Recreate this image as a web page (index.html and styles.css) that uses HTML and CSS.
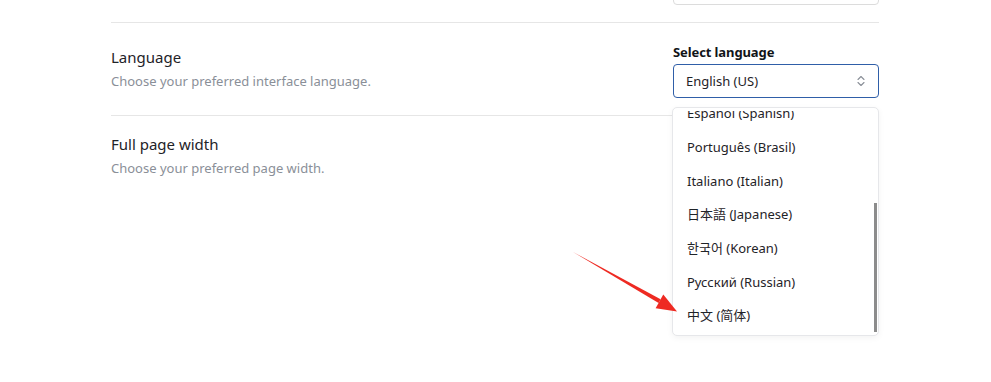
FILE: index.html
```html
<!DOCTYPE html>
<html lang="en">
<head>
<meta charset="utf-8">
<title>Settings</title>
<link rel="stylesheet" href="styles.css">
</head>
<body>
<main class="settings">
  <section class="row">
    <div class="row-text"></div>
    <div class="control">
      <div class="select"></div>
    </div>
  </section>
  <section class="row">
    <div class="row-text">
      <div class="row-title">Language</div>
      <div class="row-desc">Choose your preferred interface language.</div>
    </div>
    <div class="control">
      <div class="control-label">Select language</div>
      <div class="select select-open">
        <span>English (US)</span>
        <svg class="chev" width="10" height="12" viewBox="0 0 10 12"><path d="M2 4.5 L5 1.5 L8 4.5 M2 7.5 L5 10.5 L8 7.5" fill="none" stroke="#8a8f98" stroke-width="1.1" stroke-linecap="round" stroke-linejoin="round"/></svg>
      </div>
      <div class="dropdown">
        <div class="scroll">
          <ul class="options">
            <li>Español (Spanish)</li>
            <li>Português (Brasil)</li>
            <li>Italiano (Italian)</li>
            <li>日本語 (Japanese)</li>
            <li>한국어 (Korean)</li>
            <li>Русский (Russian)</li>
            <li>中文 (简体)</li>
          </ul>
        </div>
        <div class="thumb"></div>
      </div>
    </div>
  </section>
  <section class="row">
    <div class="row-text">
      <div class="row-title">Full page width</div>
      <div class="row-desc">Choose your preferred page width.</div>
    </div>
    <div class="control"></div>
  </section>
</main>
<svg class="arrow" width="991" height="382" viewBox="0 0 991 382">
  <polygon points="573,252 660.6,299.2 658.6,302.9" fill="#ee2a22"/>
  <polygon points="677,311.5 663.3,294.6 655.6,308.2" fill="#ee2a22"/>
</svg>
</body>
</html>
```
FILE: styles.css
```css
html, body {
  margin: 0;
  padding: 0;
  background: #ffffff;
}
body {
  font-family: "Noto Sans", "Noto Sans CJK SC", "Noto Sans CJK KR", sans-serif;
  color: #1f2328;
  width: 991px;
  height: 382px;
  overflow: hidden;
  position: relative;
}
.settings {
  margin: -46px 0 0 111px;
  width: 768px;
}
.row {
  display: flex;
  align-items: center;
  justify-content: space-between;
  padding: 17px 0;
}
.row + .row {
  border-top: 1px solid #e6e6e6;
}
.row-title {
  font-size: 15px;
  line-height: 22px;
  color: #1f2328;
}
.row-desc {
  font-size: 13px;
  line-height: 20px;
  color: #8a8f98;
  margin-top: 3px;
  margin-bottom: 1px;
}
.control {
  width: 206px;
  position: relative;
  display: flex;
  flex-direction: column;
}
.control-label {
  font-size: 13px;
  font-weight: 700;
  line-height: 20px;
  color: #111418;
  padding-top: 2px;
  margin-bottom: 2px;
  letter-spacing: -0.1px;
}
.select {
  box-sizing: border-box;
  height: 34px;
  border: 1px solid #dcdcdc;
  border-radius: 4px;
  display: flex;
  align-items: center;
  justify-content: space-between;
  padding: 0 12px 0 12px;
  font-size: 13px;
  color: #1f2328;
}
.select-open {
  border-color: #2f5ea8;
}
.chev {
  display: block;
}
.dropdown {
  position: absolute;
  top: 67px;
  left: -1px;
  width: 207px;
  height: 229px;
  box-sizing: border-box;
  border: 1px solid #e6e7ea;
  border-radius: 5px;
  background: #ffffff;
  box-shadow: 0 2px 6px rgba(0, 0, 0, 0.05);
  padding-top: 3px;
  display: flex;
  flex-direction: column;
  z-index: 2;
}
.scroll {
  flex: 1;
  display: flex;
  flex-direction: column;
  justify-content: flex-end;
  overflow: hidden;
}
.options {
  list-style: none;
  margin: 0;
  padding: 0 0 2px 0;
  flex-shrink: 0;
}
.options li {
  height: 33.67px;
  line-height: 33.67px;
  padding-left: 14px;
  font-size: 13px;
  color: #1f2328;
  white-space: nowrap;
}
.thumb {
  position: absolute;
  right: 1px;
  top: 95px;
  width: 3px;
  height: 129px;
  background: #8c8c8c;
}
.arrow {
  position: absolute;
  left: 0;
  top: 0;
  z-index: 5;
  pointer-events: none;
}
```
